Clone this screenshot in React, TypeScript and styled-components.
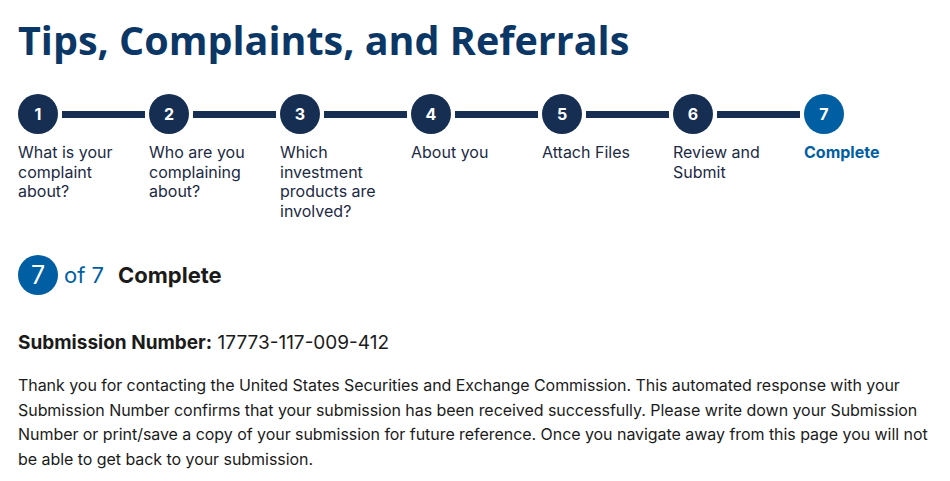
import React from "react";
import styled, { createGlobalStyle } from "styled-components";

const GlobalStyle = createGlobalStyle`
  body {
    margin: 0;
    background: #ffffff;
    font-family: "Inter", "Roboto", sans-serif;
    color: #1b1b1b;
  }
`;

const Page = styled.div`
  padding: 14px 0 0 18px;
`;

const Title = styled.h1`
  margin: 0 0 28px 0;
  font-family: "Open Sans", sans-serif;
  font-weight: 700;
  font-size: 39.5px;
  line-height: 52px;
  color: #0b3766;
  letter-spacing: 0;
`;

const Steps = styled.ol`
  display: flex;
  margin: 0;
  padding: 0;
  list-style: none;
`;

const Step = styled.li`
  width: 131px;
  display: flex;
  flex-direction: column;
`;

const StepTop = styled.div`
  display: flex;
  align-items: center;
  height: 40px;
`;

const Circle = styled.span<{ $active?: boolean }>`
  flex: 0 0 auto;
  width: 40px;
  height: 40px;
  border-radius: 50%;
  background: ${(p) => (p.$active ? "#005ea2" : "#162e51")};
  color: #ffffff;
  display: flex;
  align-items: center;
  justify-content: center;
  font-weight: 700;
  font-size: 16px;
`;

const Connector = styled.span`
  flex: 1;
  height: 7px;
  margin: 0 4px;
  background: #162e51;
`;

const StepLabel = styled.span<{ $active?: boolean }>`
  margin-top: 9px;
  width: 115px;
  font-size: 16px;
  line-height: 19.5px;
  font-weight: ${(p) => (p.$active ? 700 : 400)};
  color: ${(p) => (p.$active ? "#005ea2" : "#1c2a44")};
`;

const Heading = styled.h2`
  display: flex;
  align-items: center;
  margin: 34px 0 0 0;
  font-size: 22px;
  font-weight: 400;
`;

const BigCircle = styled.span`
  width: 40px;
  height: 40px;
  border-radius: 50%;
  background: #005ea2;
  color: #ffffff;
  display: flex;
  align-items: center;
  justify-content: center;
  font-size: 25px;
  font-weight: 400;
`;

const OfTotal = styled.span`
  margin-left: 6px;
  color: #005ea2;
`;

const HeadingText = styled.span`
  margin-left: 14px;
  font-weight: 700;
  color: #1b1b1b;
`;

const Submission = styled.p`
  margin: 36px 0 0 0;
  font-size: 19px;
  line-height: 24px;
  color: #1b1b1b;
  strong {
    font-weight: 700;
  }
`;

const Message = styled.p`
  margin: 18px 0 0 0;
  font-size: 16px;
  line-height: 24.7px;
  color: #1b1b1b;
  max-width: 928px;
  letter-spacing: -0.05px;
`;

const steps = [
  "What is your complaint about?",
  "Who are you complaining about?",
  "Which investment products are involved?",
  "About you",
  "Attach Files",
  "Review and Submit",
  "Complete",
];

export default function App() {
  const current = 7;
  return (
    <Page>
      <GlobalStyle />
      <Title>Tips, Complaints, and Referrals</Title>
      <Steps>
        {steps.map((label, i) => {
          const active = i + 1 === current;
          return (
            <Step key={label}>
              <StepTop>
                <Circle $active={active}>{i + 1}</Circle>
                {i < steps.length - 1 && <Connector />}
              </StepTop>
              <StepLabel $active={active}>{label}</StepLabel>
            </Step>
          );
        })}
      </Steps>
      <Heading>
        <BigCircle>7</BigCircle>
        <OfTotal>of 7</OfTotal>
        <HeadingText>Complete</HeadingText>
      </Heading>
      <Submission>
        <strong>Submission Number:</strong> 17773-117-009-412
      </Submission>
      <Message>
        Thank you for contacting the United States Securities and Exchange
        Commission. This automated response with your Submission Number
        confirms that your submission has been received successfully. Please
        write down your Submission Number or print/save a copy of your
        submission for future reference. Once you navigate away from this page
        you will not be able to get back to your submission.
      </Message>
    </Page>
  );
}
